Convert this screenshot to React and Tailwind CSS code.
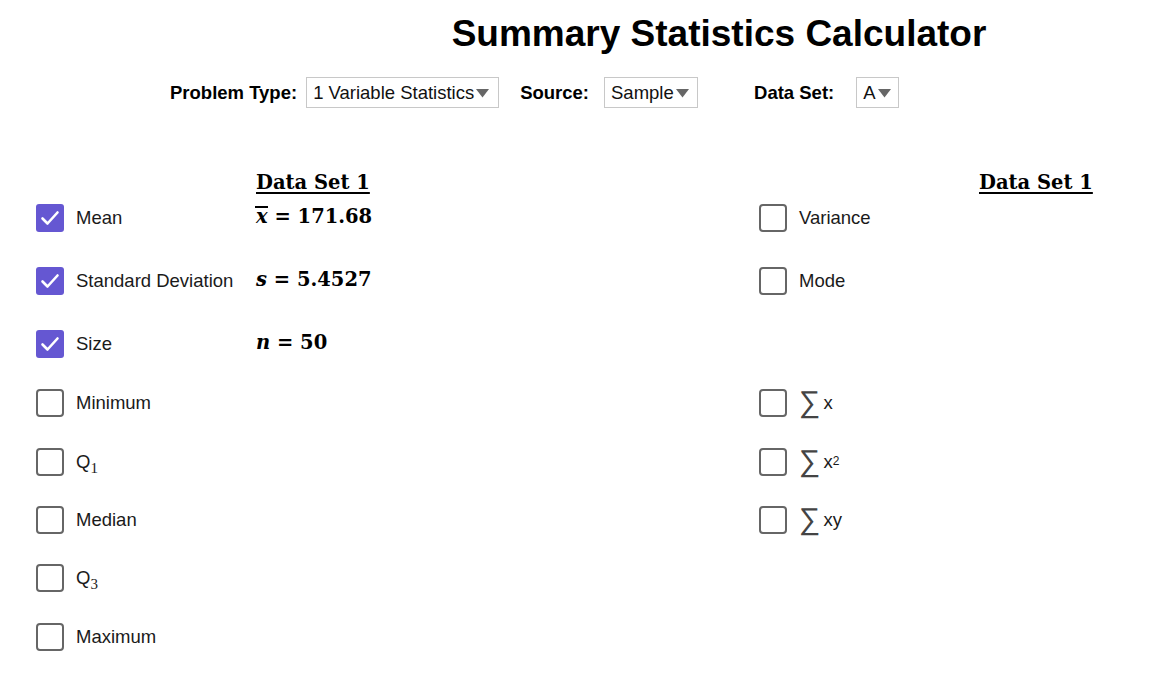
import React from "react";

const sans = { fontFamily: '"Liberation Sans", Arial, sans-serif' };
const serif = { fontFamily: '"DejaVu Serif", "Liberation Serif", serif' };

const Box = ({ checked }) =>
  checked ? (
    <div className="w-[28px] h-[28px] rounded-[3px] bg-[#6557d2] flex items-center justify-center shrink-0">
      <svg width="28" height="28" viewBox="0 0 28 28">
        <path d="M6.5 14.5 L11.5 19.5 L21.5 8.5" fill="none" stroke="white" strokeWidth="2.6" strokeLinecap="round" strokeLinejoin="round" />
      </svg>
    </div>
  ) : (
    <div className="w-[28px] h-[28px] rounded-[4px] border-2 border-[#666666] bg-white shrink-0" />
  );

const Sel = ({ label, w }) => (
  <div className={`h-[31px] border border-[#c8c8c8] bg-white flex items-center pl-[6px] pr-[4px] text-[18.5px] text-[#111] ${w}`}>
    <span>{label}</span>
    <svg width="15" height="10" viewBox="0 0 15 10" className="ml-[1px]">
      <path d="M1 1 L14 1 L7.5 9.5 Z" fill="#666" />
    </svg>
  </div>
);

const Sum = ({ children }) => (
  <span className="flex items-center">
    <span className="text-[30px] leading-none text-[#444] mr-[3px] -mt-[3px]" style={{ fontFamily: '"DejaVu Sans", sans-serif', fontWeight: 200 }}>∑</span>
    <span>{children}</span>
  </span>
);

const Sub = ({ q, n }) => (
  <span>
    {q}
    <span className="text-[15px] relative top-[5px]" style={{ fontFamily: '"Liberation Serif", serif' }}>{n}</span>
  </span>
);

const left = [
  { label: "Mean", checked: true, value: (<span><span className="italic relative"><span className="absolute -left-[1px] right-0 top-[1px] h-[1.5px] bg-black" />x</span> = 171.68</span>), mt: "mt-[7px]" },
  { label: "Standard Deviation", checked: true, value: (<span><span className="italic">s</span> = 5.4527</span>), mt: "mt-[35px]" },
  { label: "Size", checked: true, value: (<span><span className="italic">n</span> = 50</span>), mt: "mt-[35px]" },
  { label: "Minimum", mt: "mt-[31px]" },
  { label: <Sub q="Q" n="1" />, mt: "mt-[31px]" },
  { label: "Median", mt: "mt-[30px]" },
  { label: <Sub q="Q" n="3" />, mt: "mt-[30px]" },
  { label: "Maximum", mt: "mt-[31px]" },
];

const right = {
  0: "Variance",
  1: "Mode",
  3: <Sum>x</Sum>,
  4: <Sum>x<sup className="text-[12px] relative -top-[3px]">2</sup></Sum>,
  5: <Sum>xy</Sum>,
};

export default function App() {
  return (
    <div className="w-[1168px] h-[673px] bg-white overflow-hidden text-[#1a1a1a]" style={sans}>
      <h1 className="text-[37px] font-bold text-black text-center pt-[12px] leading-[44px] pl-[270px]">
        Summary Statistics Calculator
      </h1>

      <div className="flex items-center mt-[21px] pl-[170px] text-[18.5px]">
        <span className="font-bold text-black">Problem Type:</span>
        <div className="ml-[9px]"><Sel label="1 Variable Statistics" w="w-[193px]" /></div>
        <span className="font-bold text-black ml-[21px]">Source:</span>
        <div className="ml-[15px]"><Sel label="Sample" w="w-[94px]" /></div>
        <span className="font-bold text-black ml-[56px]">Data Set:</span>
        <div className="ml-[22px]"><Sel label="A" w="w-[43px]" /></div>
      </div>

      <div className="flex mt-[65px] h-[24px] items-end text-[19.5px] font-bold text-black" style={serif}>
        <div className="ml-[256px] w-[723px]">
          <span className="underline underline-offset-[3px] decoration-[1.5px]">Data Set 1</span>
        </div>
        <span className="underline underline-offset-[3px] decoration-[1.5px]">Data Set 1</span>
      </div>

      <div className="flex flex-col">
        {left.map((row, i) => (
          <div key={i} className={`flex items-center h-[28px] ${row.mt}`}>
            <div className="w-[220px] ml-[36px] flex items-center">
              <Box checked={row.checked} />
              <span className="ml-[12px] text-[18.5px]">{row.label}</span>
            </div>
            <div className="w-[503px] text-[19.5px] font-bold text-black -mt-[2px]" style={serif}>
              {row.value}
            </div>
            {right[i] && (
              <div className="flex items-center">
                <Box />
                <span className="ml-[12px] text-[18.5px]">{right[i]}</span>
              </div>
            )}
          </div>
        ))}
      </div>
    </div>
  );
}
